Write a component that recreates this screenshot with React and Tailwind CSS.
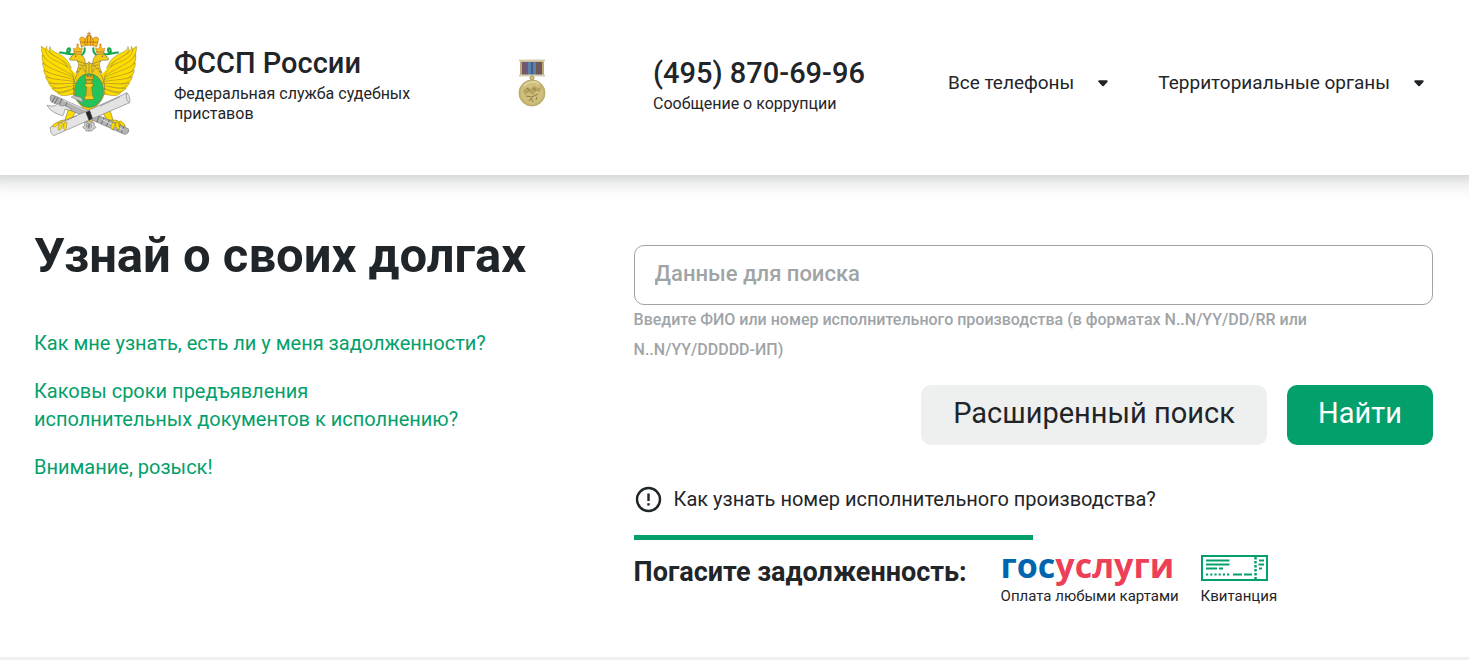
import React from "react";

const FEATHERS = [
  "M128 160 C112 128 62 112 35 78 C32 100 46 120 62 132 C86 146 110 152 128 172Z",
  "M128 166 C100 146 56 132 37 104 C33 126 52 144 70 152 C92 160 114 164 130 178Z",
  "M130 172 C100 156 58 148 38 128 C36 148 58 162 78 167 C98 172 116 172 130 184Z",
  "M130 178 C102 168 62 164 41 150 C42 168 64 178 84 180 C102 182 118 182 132 190Z",
  "M132 184 C104 178 70 180 47 170 C50 186 72 192 90 192 C106 192 120 190 134 196Z",
  "M134 190 C108 188 78 196 56 188 C62 202 80 205 96 203 C112 200 124 198 136 204Z",
  "M136 196 C114 198 90 208 66 204 C76 217 92 217 106 213 C118 209 128 206 140 214Z",
  "M138 204 C120 208 104 220 82 218 C92 229 108 228 120 223 C130 218 138 216 146 224Z",
];

function Wing() {
  return (
    <g>
      <path d="M35 78 C60 96 98 104 116 132 C124 146 130 158 140 160 L146 224 L96 226 C60 212 36 176 35 78Z" fill="#ffdc00" stroke="none" />
      <g strokeWidth="1.3">
        {FEATHERS.map((d) => (
          <path key={d} d={d} />
        ))}
        <path d="M50 79 C48 92 62 102 76 108 C92 114 104 126 112 140 C96 128 76 124 60 112 C48 102 42 90 50 79Z" />
        <path d="M60 80 C60 90 74 96 88 102 C104 110 116 122 124 144 C110 126 90 118 72 106 C60 98 54 90 60 80Z" />
      </g>
      <path d="M124 110 C128 102 140 98 150 102 C160 106 166 116 166 130 L160 150 L138 158 C146 142 148 132 142 122 C136 118 128 122 119 119 C117 115 120 111 124 110Z" fill="#f3cb12" />
      <path d="M142 122 C152 124 160 132 174 130 M150 134 L166 138 M146 144 L168 146 M142 154 L166 154" fill="none" />
      <circle cx="137" cy="108" r="2" fill="#555" stroke="none" />
      <path d="M133 100 L132 94 L130 84 L136 87 L143 76 L150 87 L157 83 L155 94 L153 101Z" fill="#ffbd18" stroke="#b87a1c" />
      <path d="M143 71 V77 M140 74 H146" fill="none" stroke="#e38b14" strokeWidth="3" />
      <path d="M132 95 H154" fill="none" />
    </g>
  );
}

function Leg() {
  return (
    <g>
      <path d="M118 258 L104 302 L124 298 L142 266Z" />
      <path d="M104 300 C96 298 84 304 74 314 C67 314 67 321 73 322 C80 312 88 309 92 310 C86 318 82 325 87 331 C92 331 90 324 99 312 C100 320 98 328 104 330 C110 326 105 318 108 310 C116 314 118 320 122 318 C127 312 120 302 112 300Z" />
    </g>
  );
}

function Emblem() {
  return (
    <svg viewBox="30 30 300 320" className="h-[107px] w-[100px] shrink-0" role="img" aria-label="Герб ФССП России">
      <g fill="#ffdc00" stroke="#77734a" strokeWidth="1.8" strokeLinejoin="round" strokeLinecap="round">
        <g fill="none" stroke="#15a84b" strokeWidth="6">
          <path d="M164 84 C166 98 158 102 156 104 M190 84 C188 98 196 102 198 104" />
          <path d="M132 101 C118 106 108 98 90 97 M116 99 C124 86 118 80 113 87 C109 94 113 99 120 101" />
          <path d="M222 101 C236 106 246 98 264 97 M238 99 C230 86 236 80 241 87 C245 94 241 99 234 101" />
        </g>
        <Wing />
        <g transform="translate(354 0) scale(-1 1)">
          <Wing />
        </g>
        <path d="M177 126 C160 138 148 146 138 168 C126 196 128 228 144 246 L158 262 L164 292 L177 334 L190 292 L196 262 L210 246 C226 228 228 196 216 168 C206 146 194 138 177 126Z" fill="#f3cb12" />
        <path d="M177 130 V156 M168 136 V156 M186 136 V156 M160 146 L166 156 M194 146 L188 156 M130 190 L138 188 M128 205 L137 204 M130 222 L138 220 M224 190 L216 188 M226 205 L217 204 M224 222 L216 220" fill="none" />
        <ellipse cx="177" cy="211" rx="43" ry="51" fill="#20c45a" />
        <path d="M154 80 L149 56 C152 49 160 49 166 57 L172 46 H182 L188 57 C194 49 202 49 206 56 L200 80 C188 74 166 74 154 80Z" fill="#ffba18" stroke="#a96918" />
        <path d="M177 36 V47 M172 41 H182 M166 57 C162 64 164 69 166 74 M188 57 C192 64 190 69 188 74 M172 47 V72 M182 47 V72 M151 66 H203" fill="none" stroke="#b27318" strokeWidth="2.5" />
        <path d="M166 165 V178 H189 V165 H184 V170 H180 V164 H175 V170 H171 V165Z M168 180 H187 L185 189 H170Z" fill="#efb616" stroke="#927019" />
        <path d="M166 190 H189 V200 H185 L187 228 H191 V238 H164 V228 H168 L170 200 H166Z" fill="#f7ce18" stroke="#927019" />
        <path d="M174 202 V228 M180 202 V228" stroke="#ad861d" />
        <Leg />
        <g transform="translate(354 0) scale(-1 1)">
          <Leg />
        </g>
      </g>
      <g stroke="#737373" strokeWidth="1.8" strokeLinejoin="round">
        <path d="M65 224 L80 229 L295 326 C299 335 292 344 282 342 L64 245 C58 238 60 228 65 224Z" fill="#b2b2b2" />
        <path d="M76 229 L66 246 M84 232 L74 250 M96 236 L86 256 M112 245 L104 263 M208 287 L200 306 M222 292 L214 311 M238 300 L229 318 M252 306 L244 324 M270 315 L263 332 M281 320 L274 338" stroke="#6c6c6c" strokeWidth="3" />
        <path d="M100 240 L190 281 M216 298 L282 330" stroke="#dedede" strokeWidth="3" />
        <path d="M84 250 C90 258 96 258 104 256 L124 266 L121 271 L105 267 C102 275 103 281 98 287 C84 282 62 276 51 255 C65 260 76 258 84 250Z" fill="#e5e5e5" />
        <path d="M124 231 L160 247 L154 232 L130 226Z" fill="#c9c9c9" />
        <path d="M62 320 L170 273 L291 218 C299 228 302 239 298 248 L184 297 L72 346 C64 344 59 330 62 320Z" fill="#e3e3e3" />
        <path d="M291 218 C286 228 290 242 298 248 M110 300 L140 287 M210 258 L270 230" fill="none" />
        <path d="M168 277 L179 272 L187 294 L177 300Z" fill="#272727" stroke="#272727" />
        <path d="M177 301 L183 306 L192 307 L193 316 L198 322 L190 327 L185 333 L177 331 L169 333 L165 326 L158 321 L164 315 L164 307 L172 306Z" fill="#cfcfcf" />
        <circle cx="177" cy="317" r="8" fill="#ededed" />
        <path d="M173 315 L177 310 L181 315 L179 322 H174Z" fill="#8a8a8a" />
      </g>
      <g fill="#ffdc00" stroke="#8b7b1c" strokeWidth="1.5" strokeLinejoin="round">
        <path d="M84 307 C77 307 68 313 68 319 C74 323 80 316 86 313Z M96 306 C88 311 81 324 86 330 C94 331 93 321 101 312Z M105 304 C99 314 98 326 104 329 C112 325 108 316 111 307Z" />
        <path d="M250 307 C243 312 240 325 246 329 C253 327 252 318 257 311Z M258 305 C256 315 259 327 266 328 C272 323 265 314 265 307Z M268 304 C271 313 277 321 284 317 C285 310 276 305 271 302Z" />
      </g>
    </svg>
  );
}

function Medal() {
  return (
    <svg viewBox="0 0 28 48" className="h-12 w-7 shrink-0" role="img" aria-label="Медаль">
      <path d="M2 2 H26 V17 H2Z" fill="#b9a878" />
      <path d="M4 3 H10 V16 H4Z" fill="#79556a" />
      <path d="M10 3 H18 V16 H10Z" fill="#5c80a8" />
      <path d="M13 3 H15 V16 H13Z" fill="#3d608d" />
      <path d="M18 3 H24 V16 H18Z" fill="#76564d" />
      <path d="M8 3 V16 M20 3 V16" stroke="#4f6388" strokeWidth="1" />
      <path d="M1 1.5 H27 M1 16.5 H27" stroke="#d8cfae" strokeWidth="2" />
      <circle cx="14" cy="19" r="2" fill="#d3c68c" stroke="#a79455" />
      <circle cx="14" cy="34" r="13" fill="#c6b570" stroke="#b9a96c" />
      <circle cx="14" cy="34" r="11" fill="#cebf7c" />
      <path d="M5 32 L9 28 L13 30 L16 27 L20 29 L23 28 L22 33 L18 32 L15 36 L11 33 L7 36Z" fill="#b5a362" />
      <path d="M9 29 L12 32 M15 29 L18 31 M8 37 L14 38 L20 35 M11 42 L13 39 L15 43 M18 41 L19 38" fill="none" stroke="#8d7c44" />
      <path d="M6 27 C9 23 16 21 21 25" fill="none" stroke="#e3d8a2" strokeWidth="1.5" />
    </svg>
  );
}

function Caret() {
  return (
    <svg viewBox="0 0 10 8" className="h-2 w-[10px] shrink-0" aria-hidden="true">
      <path d="M1.300 2.300 H8.700 L5 6.300Z" fill="#1f2529" stroke="#1f2529" strokeWidth="2" strokeLinejoin="round" />
    </svg>
  );
}

function ReceiptIcon() {
  return (
    <svg viewBox="0 0 67 26" className="h-[26px] w-[67px]" fill="none" stroke="#04a06b" aria-hidden="true">
      <path d="M1 1 H66 V25 H1Z" strokeWidth="2" />
      <path d="M5 5.5 H28.500 M5 9.500 H28.500 M5 13.500 H16 M18 13.500 H22" strokeWidth="2" />
      <path d="M5 19.500 H28.500" strokeWidth="2" strokeDasharray="2.200 2" />
      <path d="M32 19.500 H41 M43 19.500 H51" strokeWidth="2" />
      <path d="M54.500 2 V24" strokeWidth="2.500" strokeDasharray="2.500 1.500" />
      <path d="M58 5.500 H63 M57.500 9.500 H63 M58 13.500 H61" strokeWidth="2" />
    </svg>
  );
}

export default function App() {
  return (
    <div className="overflow-x-clip bg-white font-['Roboto','Liberation_Sans',sans-serif] text-[#1f2529]">
      <header className="flex h-[175px] items-start pr-[45px] pl-10 shadow-[0_-18px_20px_20px_rgba(31,37,41,0.3)]">
        <div className="flex flex-1 pt-[30px]">
          <Emblem />
          <div className="ml-[34px] w-[260px] pt-[15px]">
            <p className="text-[29px] leading-9 font-medium">ФССП России</p>
            <p className="mt-[3px] text-[16px] leading-5">
              Федеральная служба судебных приставов
            </p>
          </div>
          <div className="ml-[84px] pt-[29px]">
            <Medal />
          </div>
          <div className="ml-[107px] pt-[25px]">
            <a href="tel:+74958706996" className="block text-[29px] leading-9 font-medium">(495) 870-69-96</a>
            <p className="mt-[3px] text-[16px] leading-5">Сообщение о коррупции</p>
          </div>
        </div>
        <nav className="flex gap-[50px] pt-[69px] text-[19px] leading-7">
          <button type="button" className="flex items-center gap-6">
            Все телефоны
            <Caret />
          </button>
          <button type="button" className="flex items-center gap-6">
            Территориальные органы
            <Caret />
          </button>
        </nav>
      </header>

      <main className="grid grid-cols-[3fr_4fr] border-b-3 border-[#eef0f0] pr-9 pb-[51px] pl-[34px]">
        <section className="pt-[51px]">
          <h1 className="text-[49px] leading-[60px] font-bold">Узнай о своих долгах</h1>
          <ul className="mt-[43px] flex flex-col gap-5 text-[20px] leading-7 text-[#04a06b]">
            <li><a href="#debts">Как мне узнать, есть ли у меня задолженности?</a></li>
            <li>
              <a href="#terms">
                Каковы сроки предъявления
                <br />
                исполнительных документов к исполнению?
              </a>
            </li>
            <li><a href="#wanted">Внимание, розыск!</a></li>
          </ul>
        </section>

        <section className="pt-[70px]">
          <form onSubmit={(e) => e.preventDefault()}>
            <input
              type="text"
              aria-label="Данные для поиска"
              aria-describedby="search-hint"
              placeholder="Данные для поиска"
              className="block h-[60px] w-full rounded-[10px] border border-[#9fa4a7] px-5 pb-1 text-[22px] font-medium outline-none placeholder:text-[#9fa4a7]"
            />
            <p id="search-hint" className="max-w-[700px] text-[16px] leading-[30px] font-medium text-[#9fa4a7]">
              Введите ФИО или номер исполнительного производства (в форматах N..N/YY/DD/RR или
              <br />
              N..N/YY/DDDDD-ИП)
            </p>
            <div className="mt-5 flex justify-end gap-5 text-[29px]">
              <button type="button" className="h-[60px] w-[346px] rounded-[10px] bg-[#eef0f0] pb-[2px]">Расширенный поиск</button>
              <button type="submit" className="h-[60px] w-[146px] rounded-[10px] bg-[#04a06b] pb-[2px] text-white">Найти</button>
            </div>
          </form>

          <a href="#number" className="mt-10 flex items-center gap-3 text-[20px] leading-7">
            <svg viewBox="0 0 28 28" className="size-7" fill="none" stroke="#1f2529" strokeWidth="2.4" aria-hidden="true">
              <circle cx="14.500" cy="14.500" r="11.500" />
              <path d="M14.500 8.500 V16 M14.500 18.300 V20.500" />
            </svg>
            Как узнать номер исполнительного производства?
          </a>

          <div className="mt-[22px] h-[5px] w-1/2 bg-[#04a06b]" />

          <div className="flex items-start">
            <h2 className="w-[367px] pt-[14px] text-[27px] leading-9 font-bold">Погасите задолженность:</h2>
            <a href="#gosuslugi" className="w-[200px] pt-[5px]">
              <span className="block font-['Open_Sans',sans-serif] text-[34px] leading-10 font-bold text-[#0065b1]">
                гос<span className="text-[#ee3f58]">услуги</span>
              </span>
              <span className="mt-[1px] block text-[15px] leading-5">Оплата любыми картами</span>
            </a>
            <a href="#receipt" className="pt-[15px]">
              <ReceiptIcon />
              <span className="mt-[5px] block text-[15px] leading-5">Квитанция</span>
            </a>
          </div>
        </section>
      </main>
    </div>
  );
}
